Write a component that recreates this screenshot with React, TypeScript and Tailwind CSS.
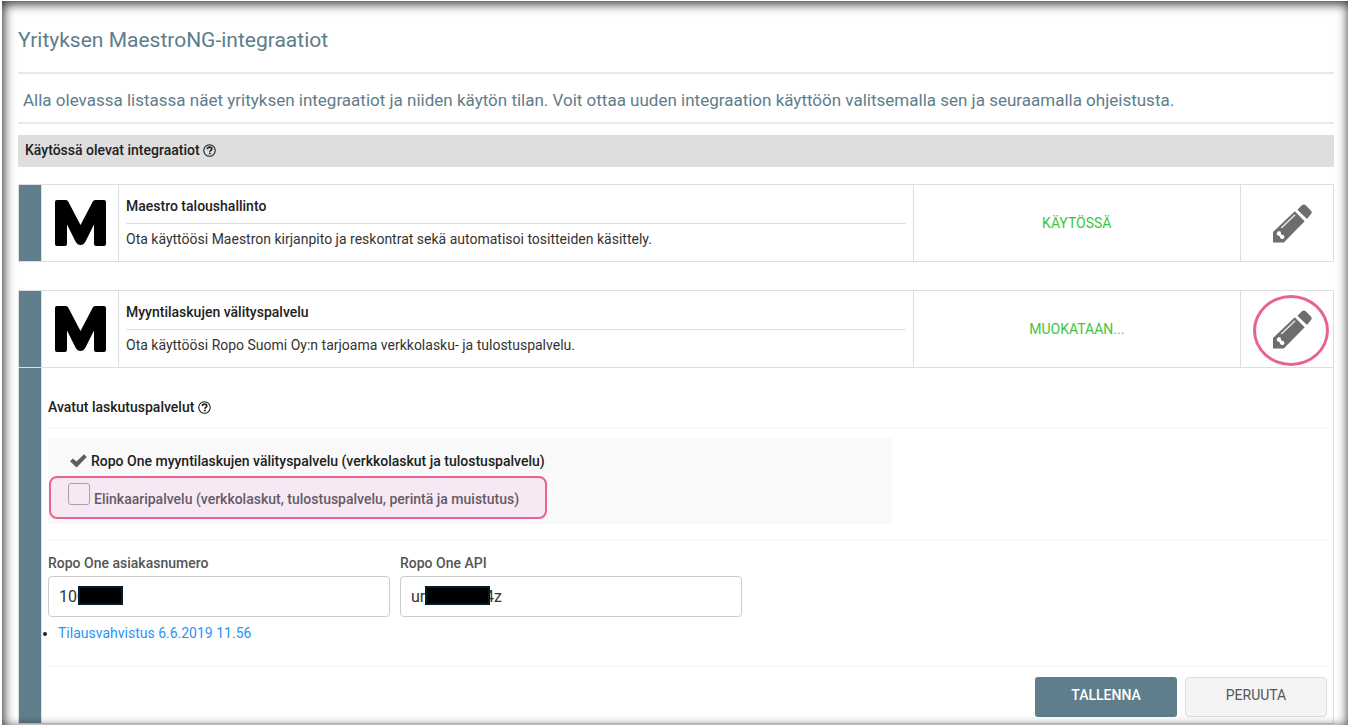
import { useState } from 'react';
import type { ReactNode } from 'react';

function HelpIcon() {
  return (
    <svg viewBox="0 0 24 24" className="inline-block size-[13px] align-[-2px]" aria-hidden="true">
      <circle cx="12" cy="12" r="10.6" fill="none" stroke="currentColor" strokeWidth="2" />
      <path
        d="M8 9.4c.2-2.300 1.800-3.700 4.200-3.700 2.300 0 4 1.400 4 3.400 0 2.900-3.600 2.700-3.600 5.300"
        fill="none"
        stroke="currentColor"
        strokeWidth="3"
      />
      <rect x="11" y="16" width="3.200" height="3" fill="currentColor" />
    </svg>
  );
}

function PencilIcon() {
  return (
    <svg viewBox="0 0 39 39" className="size-[39px]" fill="#6d6d6d" aria-hidden="true">
      <path d="M24 6.200 28.600 1.600Q30.800-.6 33 1.600L37.600 6.200Q39.800 8.400 37.600 10.600L34 15Z" />
      <path d="M21.800 7.300 31.700 17.200 10.800 38.400H0V27.900Z" />
      <path d="M22.500 5.200 34.300 17" stroke="#fff" strokeWidth="2" />
      <path d="M8.300 24 22.100 10.800" stroke="#e6e6e6" strokeWidth="1.500" />
      <path d="M5.400 27 7.700 27.800 8.200 30.500 10.900 31.200 11.500 33.900 9.400 35.200 7.400 34.300 6.600 32.200 4 30.900 3.700 29Z" fill="#fff" />
    </svg>
  );
}

function CheckIcon() {
  return (
    <svg viewBox="0 0 17 14" className="h-[14px] w-[17px]" fill="#5f5f5f" aria-hidden="true">
      <path d="M0 7.200 2.900 4.400 6.400 7.500 14 .3 16.800 2.900 6.600 13.500Z" />
    </svg>
  );
}

function Logo() {
  return (
    <svg viewBox="0 0 51 46" className="h-[46px] w-[51px]" role="img" aria-label="Maestro">
      <path
        d="M2 0H11Q12.500 0 13.200 1.500L25.500 25 37.800 1.500Q38.500 0 40 0H49Q51 0 51 2V44Q51 46 49 46H41Q39 46 39 44V24.500L30.500 41.500Q28.500 45 25.500 45 22.500 45 20.500 41.500L12 24.500V44Q12 46 10 46H2Q0 46 0 44V2Q0 0 2 0Z"
      />
    </svg>
  );
}

interface RowProps {
  title: string;
  description: string;
  status: string;
  highlighted?: boolean;
  onEdit: () => void;
}

function IntegrationRow({ title, description, status, highlighted, onEdit }: RowProps) {
  return (
    <div className="grid h-[78px] grid-cols-[23px_77px_1fr_25%_7%] border border-[#dedede]">
      <div className="border-r border-[#dedede] bg-[#607d8b]" />
      <div className="flex items-center justify-center border-r border-[#dedede]">
        <Logo />
      </div>
      <div className="px-[7px] pt-[11px]">
        <h2 className="border-b border-[#dedede] pb-[7px] text-sm leading-5 font-medium text-[#212121]">
          {title}
        </h2>
        <p className="pt-[5px] text-sm leading-5 text-[#333]">{description}</p>
      </div>
      <div className="flex items-center justify-center border-x border-[#dedede] text-sm text-[#3ac73a]">
        {status}
      </div>
      <div className="flex items-center justify-center pl-[10px]">
        <button type="button" aria-label={`Muokkaa: ${title}`} onClick={onEdit} className="relative">
          <PencilIcon />
          {highlighted && (
            <span className="absolute -top-[15px] -left-5 h-[71px] w-[76px] rounded-[50%] border-[3px] border-[#e96294]" />
          )}
        </button>
      </div>
    </div>
  );
}

function MaskedInput({ id, label, value, children }: { id: string; label: string; value: string; children: ReactNode }) {
  return (
    <div>
      <label htmlFor={id} className="block text-sm leading-5 font-medium text-[#555]">
        {label}
      </label>
      <div className="relative mt-[3px]">
        <input
          id={id}
          defaultValue={value}
          className="block h-[41px] w-full rounded border border-[#ccc] bg-white px-[10px] text-base text-[#333]"
        />
        {children}
      </div>
    </div>
  );
}

export default function App() {
  const [editing, setEditing] = useState(true);
  const [lifecycle, setLifecycle] = useState(false);

  return (
    <div className="relative mt-px ml-[2px] bg-white pt-6 pr-[14px] pb-[2px] pl-4 font-[Roboto,sans-serif] text-[#212121]">
      <h1 className="border-b-2 border-[#e9e9e9] pb-[17px] text-[21px] leading-[30px] text-[#607d8b]">
        Yrityksen MaestroNG-integraatiot
      </h1>
      <p className="border-b-2 border-[#e9e9e9] px-[5px] pt-[14px] pb-[10px] text-[17px] leading-6 text-[#607d8b]">
        Alla olevassa listassa näet yrityksen integraatiot ja niiden käytön tilan. Voit ottaa uuden
        integraation käyttöön valitsemalla sen ja seuraamalla ohjeistusta.
      </p>
      <div className="mt-[11px] bg-[#dedede] px-[7px] pt-[5px] pb-[7px] text-sm leading-5 font-medium">
        Käytössä olevat integraatiot <HelpIcon />
      </div>

      <div className="mt-[17px]">
        <IntegrationRow
          title="Maestro taloushallinto"
          description="Ota käyttöösi Maestron kirjanpito ja reskontrat sekä automatisoi tositteiden käsittely."
          status="KÄYTÖSSÄ"
          onEdit={() => {}}
        />
      </div>

      <div className="mt-7">
        <IntegrationRow
          title="Myyntilaskujen välityspalvelu"
          description="Ota käyttöösi Ropo Suomi Oy:n tarjoama verkkolasku- ja tulostuspalvelu."
          status="MUOKATAAN..."
          highlighted
          onEdit={() => setEditing(true)}
        />
        {editing && (
          <div className="flex border-x border-b border-[#dedede]">
            <div className="w-[23px] shrink-0 border-r border-[#dedede] bg-[#607d8b]" />
            <div className="flex-1 px-[6px] pt-[29px] pb-[6px]">
              <h3 className="border-b-2 border-[#f9f9f9] pb-[10px] text-sm leading-5 font-medium">
                Avatut laskutuspalvelut <HelpIcon />
              </h3>

              <div className="mt-[9px] h-[86px] w-[66%] bg-[#f9f9f9] pt-[13px]">
                <div className="flex items-center gap-1 pl-[22px] text-sm leading-5 font-medium">
                  <CheckIcon />
                  Ropo One myyntilaskujen välityspalvelu (verkkolaskut ja tulostuspalvelu)
                </div>
                <label className="mt-[5px] ml-px flex h-[43px] w-[498px] gap-1 rounded-lg border-2 border-[#e96294] bg-[#f6e9f4] pt-[5px] pl-[17px] text-sm font-medium text-[#665a68]">
                  <input
                    type="checkbox"
                    checked={lifecycle}
                    onChange={(e) => setLifecycle(e.target.checked)}
                    className="size-[22px] appearance-none rounded-[3px] border border-[#a9a0ab] checked:bg-[#607d8b]"
                  />
                  <span className="pt-[6px] leading-5">
                    Elinkaaripalvelu (verkkolaskut, tulostuspalvelu, perintä ja muistutus)
                  </span>
                </label>
              </div>

              <div className="mt-[15px] grid grid-cols-[342px_342px] gap-[10px] border-t-2 border-[#f9f9f9] pt-3">
                <MaskedInput id="customer-number" label="Ropo One asiakasnumero" value="1000000">
                  <span className="absolute top-[10px] left-[30px] h-[19px] w-[45px] border-2 border-[#031c2b] bg-black" />
                </MaskedInput>
                <MaskedInput id="api-key" label="Ropo One API" value="urwxxxxxx4z">
                  <span className="absolute top-[10px] left-[25px] h-[19px] w-[65px] border-2 border-[#031c2b] bg-black" />
                </MaskedInput>
              </div>

              <ul className="mt-[6px] list-disc pl-[10px] text-sm leading-5">
                <li>
                  <a href="#tilausvahvistus" className="text-[#2a93f5]">
                    Tilausvahvistus 6.6.2019 11.56
                  </a>
                </li>
              </ul>

              <div className="mt-[22px] flex justify-end gap-2 border-t-2 border-[#f9f9f9] pt-[10px] text-sm">
                <button
                  type="button"
                  className="h-10 w-[142px] rounded-[3px] bg-[#607d8b] pb-1 font-medium text-white"
                >
                  TALLENNA
                </button>
                <button
                  type="button"
                  onClick={() => setEditing(false)}
                  className="h-10 w-[142px] rounded border border-[#dedede] bg-[#f4f4f4] pb-1 text-[#555]"
                >
                  PERUUTA
                </button>
              </div>
            </div>
          </div>
        )}
      </div>

      <div className="pointer-events-none absolute inset-0 shadow-[inset_1px_2px_11px_1px_rgba(0,0,0,0.8)]" />
    </div>
  );
}
